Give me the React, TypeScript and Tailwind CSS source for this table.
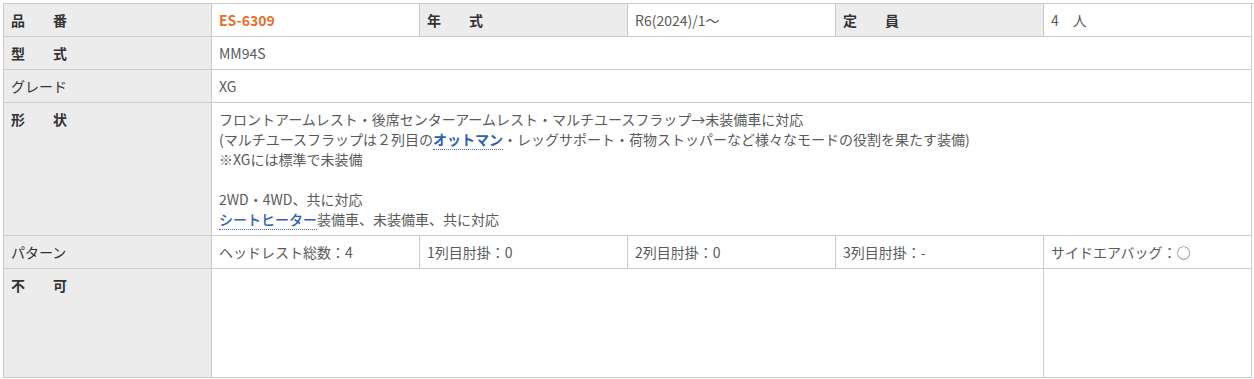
const label = "bg-[#ececec] border-r border-b border-[#cccccc] px-[7px] py-[6px] font-bold text-[#333333]"
const kanaLabel = "bg-[#ececec] border-r border-b border-[#cccccc] px-[7px] py-[6px] text-[#333333]"
const cell = "border-r border-b border-[#cccccc] px-[7px] py-[6px] text-[#5a5a5a]"
const dotted = "border-b border-dotted border-[#4a6aa8]"

export default function App() {
  return (
    <div className="bg-white min-h-[379px] pt-[3px] pl-[3px] font-['Noto_Sans_CJK_JP',sans-serif] text-[14px] leading-5">
      <div className="grid grid-cols-[repeat(6,208px)] border-l border-t border-[#cccccc]">
        <div className={label}>品　　番</div>
        <div className={cell}><span className="font-bold text-[#e46f2a]">ES-6309</span></div>
        <div className={label}>年　　式</div>
        <div className={cell}>R6(2024)/1～</div>
        <div className={label}>定　　員</div>
        <div className={cell}>4　人</div>

        <div className={label}>型　　式</div>
        <div className={`${cell} col-span-5`}>MM94S</div>

        <div className={kanaLabel}>グレード</div>
        <div className={`${cell} col-span-5`}>XG</div>

        <div className={label}>形　　状</div>
        <div className={`${cell} col-span-5`}>
          <p>フロントアームレスト・後席センターアームレスト・マルチユースフラップ→未装備車に対応</p>
          <p>
            (マルチユースフラップは２列目の
            <span className={`font-bold text-[#2f5fae] ${dotted}`}>オットマン</span>
            ・レッグサポート・荷物ストッパーなど様々なモードの役割を果たす装備)
          </p>
          <p>※XGには標準で未装備</p>
          <p>&nbsp;</p>
          <p>2WD・4WD、共に対応</p>
          <p>
            <span className={`font-medium text-[#2f5fae] ${dotted}`}>シートヒーター</span>
            装備車、未装備車、共に対応
          </p>
        </div>

        <div className={kanaLabel}>パターン</div>
        <div className={cell}>ヘッドレスト総数：4</div>
        <div className={cell}>1列目肘掛：0</div>
        <div className={cell}>2列目肘掛：0</div>
        <div className={cell}>3列目肘掛：-</div>
        <div className={`${cell} text-[#3d63a8]`}>サイドエアバッグ：○</div>

        <div className={`${label} h-[109px]`}>不　　可</div>
        <div className={`${cell} col-span-4`}></div>
        <div className={cell}></div>
      </div>
    </div>
  )
}
